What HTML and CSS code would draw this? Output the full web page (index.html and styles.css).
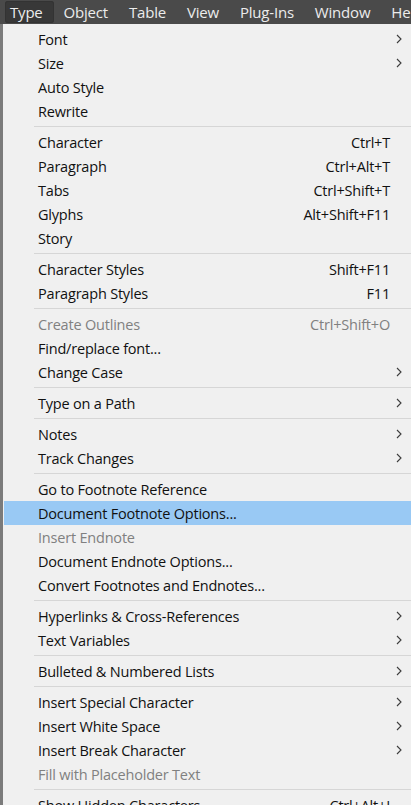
FILE: index.html
```html
<!DOCTYPE html>
<html lang="en">
<head>
    <meta charset="UTF-8">
    <meta name="viewport" content="width=device-width, initial-scale=1.0">
    <title>Type menu</title>
    <link rel="stylesheet" href="styles.css">
</head>
<body>
    <!-- Top menu bar -->
    <div class="menubar">
        <span class="top active">Type</span>
        <span class="top">Object</span>
        <span class="top">Table</span>
        <span class="top">View</span>
        <span class="top">Plug-Ins</span>
        <span class="top">Window</span>
        <span class="top">Help</span>
    </div>

    <!-- Open dropdown -->
    <div class="menu">
        <div class="item"><span>Font</span><svg class="arrow" width="6" height="10" viewBox="0 0 6 10"><path d="M1 1l4 4-4 4"/></svg></div>
        <div class="item"><span>Size</span><svg class="arrow" width="6" height="10" viewBox="0 0 6 10"><path d="M1 1l4 4-4 4"/></svg></div>
        <div class="item"><span>Auto Style</span></div>
        <div class="item"><span>Rewrite</span></div>
        <div class="sep"></div>
        <div class="item"><span>Character</span><span class="key">Ctrl+T</span></div>
        <div class="item"><span>Paragraph</span><span class="key">Ctrl+Alt+T</span></div>
        <div class="item"><span>Tabs</span><span class="key">Ctrl+Shift+T</span></div>
        <div class="item"><span>Glyphs</span><span class="key">Alt+Shift+F11</span></div>
        <div class="item"><span>Story</span></div>
        <div class="sep"></div>
        <div class="item"><span>Character Styles</span><span class="key">Shift+F11</span></div>
        <div class="item"><span>Paragraph Styles</span><span class="key">F11</span></div>
        <div class="sep"></div>
        <div class="item disabled"><span>Create Outlines</span><span class="key">Ctrl+Shift+O</span></div>
        <div class="item"><span>Find/replace font...</span></div>
        <div class="item"><span>Change Case</span><svg class="arrow" width="6" height="10" viewBox="0 0 6 10"><path d="M1 1l4 4-4 4"/></svg></div>
        <div class="sep"></div>
        <div class="item"><span>Type on a Path</span><svg class="arrow" width="6" height="10" viewBox="0 0 6 10"><path d="M1 1l4 4-4 4"/></svg></div>
        <div class="sep"></div>
        <div class="item"><span>Notes</span><svg class="arrow" width="6" height="10" viewBox="0 0 6 10"><path d="M1 1l4 4-4 4"/></svg></div>
        <div class="item"><span>Track Changes</span><svg class="arrow" width="6" height="10" viewBox="0 0 6 10"><path d="M1 1l4 4-4 4"/></svg></div>
        <div class="sep"></div>
        <div class="item"><span>Go to Footnote Reference</span></div>
        <div class="item selected"><span>Document Footnote Options...</span></div>
        <div class="item disabled"><span>Insert Endnote</span></div>
        <div class="item"><span>Document Endnote Options...</span></div>
        <div class="item"><span>Convert Footnotes and Endnotes...</span></div>
        <div class="sep"></div>
        <div class="item"><span>Hyperlinks &amp; Cross-References</span><svg class="arrow" width="6" height="10" viewBox="0 0 6 10"><path d="M1 1l4 4-4 4"/></svg></div>
        <div class="item"><span>Text Variables</span><svg class="arrow" width="6" height="10" viewBox="0 0 6 10"><path d="M1 1l4 4-4 4"/></svg></div>
        <div class="sep"></div>
        <div class="item"><span>Bulleted &amp; Numbered Lists</span><svg class="arrow" width="6" height="10" viewBox="0 0 6 10"><path d="M1 1l4 4-4 4"/></svg></div>
        <div class="sep"></div>
        <div class="item"><span>Insert Special Character</span><svg class="arrow" width="6" height="10" viewBox="0 0 6 10"><path d="M1 1l4 4-4 4"/></svg></div>
        <div class="item"><span>Insert White Space</span><svg class="arrow" width="6" height="10" viewBox="0 0 6 10"><path d="M1 1l4 4-4 4"/></svg></div>
        <div class="item"><span>Insert Break Character</span><svg class="arrow" width="6" height="10" viewBox="0 0 6 10"><path d="M1 1l4 4-4 4"/></svg></div>
        <div class="item disabled"><span>Fill with Placeholder Text</span></div>
        <div class="sep"></div>
        <div class="item"><span>Show Hidden Characters</span><span class="key">Ctrl+Alt+I</span></div>
    </div>
</body>
</html>
```

FILE: styles.css
```css
/* Windows-style application menu */
* { box-sizing: border-box; }
html, body { margin: 0; height: 100%; overflow: hidden; }
body { font-family: "Open Sans", "Noto Sans", Arial, sans-serif; font-size: 14.5px; letter-spacing: -0.2px; background-color: #4a4a4a; }

.menubar { display: flex; gap: 5px; height: 24px; padding: 1px 0 1px 5px; background-color: #4a4a4a; white-space: nowrap; }
.top { display: flex; align-items: center; padding: 0 11px 0 5px; color: #ececec; font-size: 15px; border-radius: 3px; }
.top.active { background-color: #383838; box-shadow: inset 0 0 0 1px #333; }

.menu { border-left: 3px solid #7b7b7b; padding: 3px 0 0 1px; background-color: #f0f0f0; height: 100%; }
.item { display: flex; align-items: center; height: 24px; padding: 0 9px 0 34px; color: #111; white-space: nowrap; }
.item.disabled { color: #808080; }
.item.selected { background-color: #99c9f4; }
.key { margin-left: auto; margin-right: 12px; }
.arrow { margin-left: auto; flex: none; }
.arrow path { fill: none; stroke: #3c3c3c; stroke-width: 1.1; }
.sep { height: 1px; margin: 3px 0 3px 30px; background-color: #d6d6d6; }
```
